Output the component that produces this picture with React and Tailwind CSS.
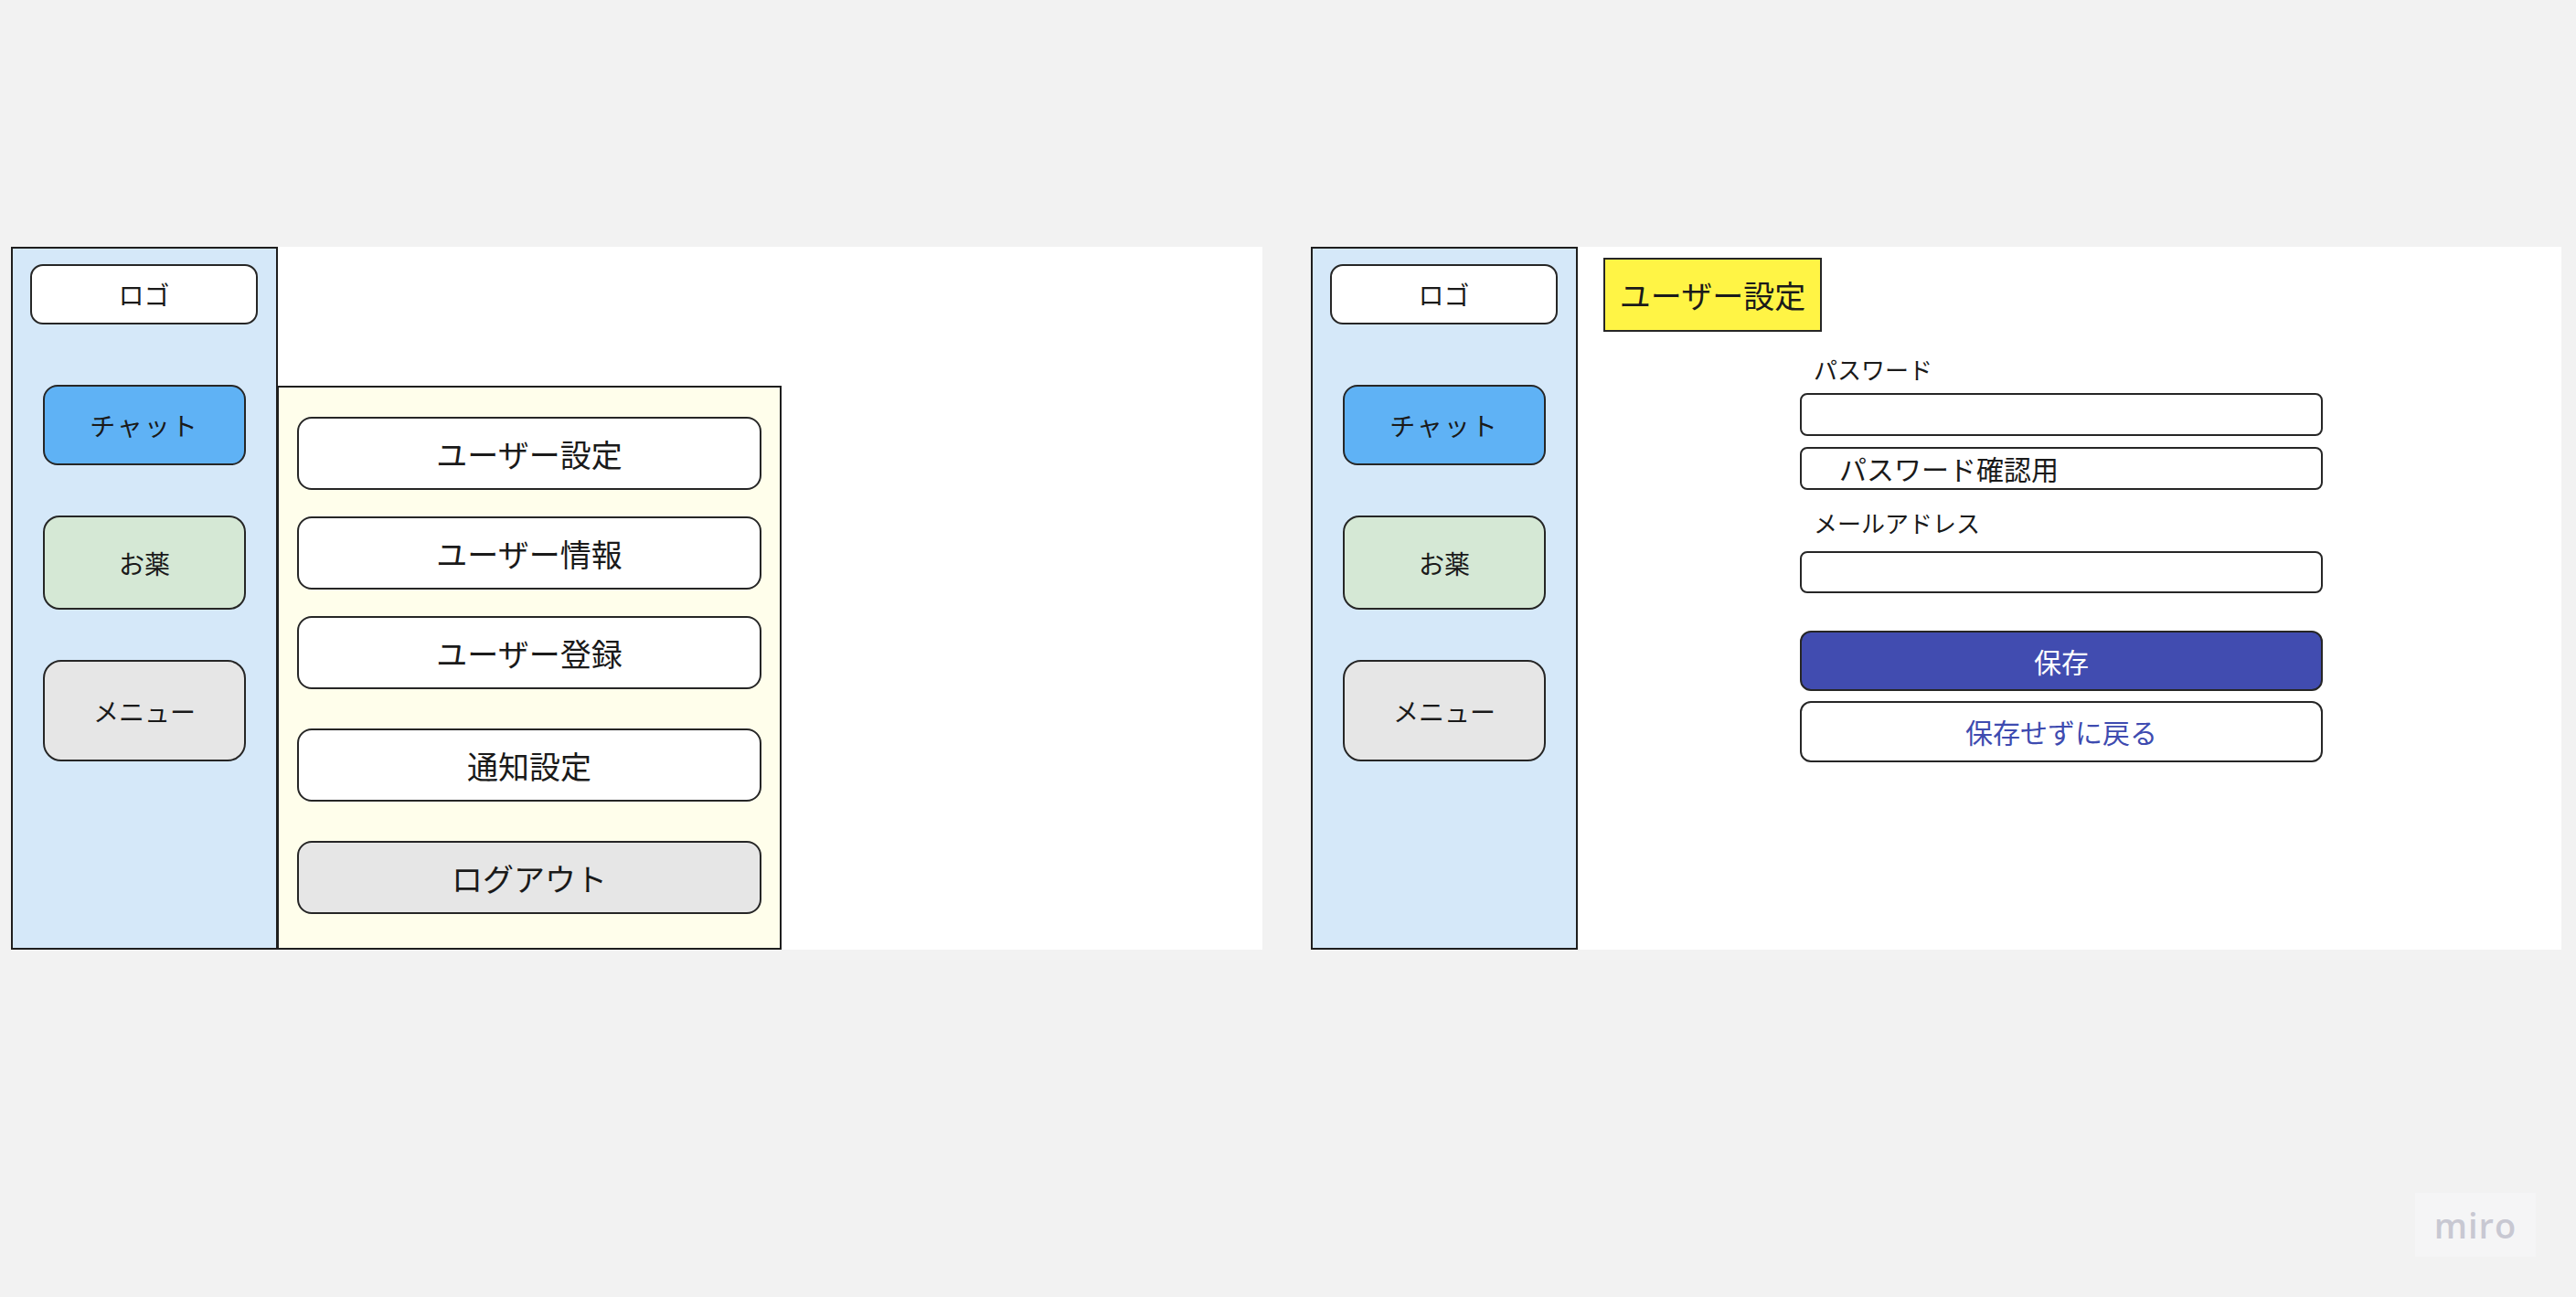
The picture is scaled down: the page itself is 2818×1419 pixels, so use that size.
import React from "react";

const font = { fontFamily: '"Noto Sans CJK JP", "Noto Sans", sans-serif' };

const Sidebar = () => (
  <div className="w-[292px] h-full shrink-0 bg-[#d5e8f9] border-2 border-[#1e1e1e] flex flex-col">
    <div className="mt-[17px] ml-[19px] w-[249px] h-[66px] bg-white border-2 border-[#262626] rounded-[14px] flex items-center justify-center text-[28px] text-[#1a1a1a]">
      ロゴ
    </div>
    <div className="mt-[66px] ml-[33px] w-[222px] h-[88px] bg-[#5fb2f5] border-2 border-[#262626] rounded-[16px] flex items-center justify-center text-[28px] text-[#1a1a1a] tracking-[2px]">
      チャット
    </div>
    <div className="mt-[55px] ml-[33px] w-[222px] h-[103px] bg-[#d5e8d5] border-2 border-[#262626] rounded-[18px] flex items-center justify-center text-[28px] text-[#1a1a1a]">
      お薬
    </div>
    <div className="mt-[55px] ml-[33px] w-[222px] h-[111px] bg-[#e6e6e6] border-2 border-[#262626] rounded-[20px] flex items-center justify-center text-[28px] text-[#1a1a1a]">
      メニュー
    </div>
  </div>
);

const menuItems = [
  { label: "ユーザー設定", mt: "mt-[32px]", bg: "bg-white" },
  { label: "ユーザー情報", mt: "mt-[29px]", bg: "bg-white" },
  { label: "ユーザー登録", mt: "mt-[29px]", bg: "bg-white" },
  { label: "通知設定", mt: "mt-[43px]", bg: "bg-white" },
  { label: "ログアウト", mt: "mt-[43px]", bg: "bg-[#e6e6e6]" },
];

const MenuPanel = () => (
  <div className="w-[553px] flex-1 -ml-[2px] bg-[#fffeeb] border-2 border-l-[3px] border-[#1e1e1e] flex flex-col pl-[20px]">
    {menuItems.map((item) => (
      <div
        key={item.label}
        className={`${item.mt} w-[508px] h-[80px] ${item.bg} border-2 border-[#262626] rounded-[16px] flex items-center justify-center text-[34px] text-[#1a1a1a]`}
      >
        {item.label}
      </div>
    ))}
  </div>
);

const SettingsForm = () => (
  <div className="flex flex-col">
    <div className="mt-[12px] ml-[28px] w-[239px] h-[81px] bg-[#fff445] border-2 border-[#262626] flex items-center justify-center text-[34px] text-[#1a1a1a]">
      ユーザー設定
    </div>
    <div className="ml-[243px] w-[572px] flex flex-col">
      <div className="h-[67px] pt-[14px] pl-[15px] flex items-center text-[26px] text-[#1a1a1a]">
        パスワード
      </div>
      <div className="h-[47px] bg-white border-2 border-[#262626] rounded-[8px]" />
      <div className="mt-[12px] h-[47px] bg-white border-2 border-[#262626] rounded-[8px] flex items-center pl-[41px] text-[30px] text-[#1a1a1a]">
        パスワード確認用
      </div>
      <div className="h-[67px] pt-[4px] pl-[15px] flex items-center text-[26px] text-[#1a1a1a]">
        メールアドレス
      </div>
      <div className="h-[46px] bg-white border-2 border-[#262626] rounded-[8px]" />
      <div className="mt-[41px] h-[66px] bg-[#414cb0] border-2 border-[#262626] rounded-[12px] flex items-center justify-center text-[30px] text-white">
        保存
      </div>
      <div className="mt-[11px] h-[67px] bg-white border-2 border-[#262626] rounded-[12px] flex items-center justify-center text-[30px] text-[#3e4bb0]">
        保存せずに戻る
      </div>
    </div>
  </div>
);

export default function App() {
  return (
    <div className="relative w-[2818px] h-[1419px] bg-[#f2f2f2] overflow-hidden" style={font}>
      <div className="flex pt-[270px] pl-[12px] gap-[53px]">
        {/* メニュー画面 */}
        <div className="w-[1369px] h-[769px] bg-white flex">
          <Sidebar />
          <div className="flex flex-col h-full">
            <div className="h-[152px] shrink-0" />
            <MenuPanel />
          </div>
        </div>

        {/* ユーザー設定画面 */}
        <div className="w-[1368px] h-[769px] bg-white flex">
          <Sidebar />
          <SettingsForm />
        </div>
      </div>

      {/* miro watermark */}
      <div className="absolute left-[2642px] top-[1305px] w-[132px] h-[70px] bg-[#f5f5f6] flex items-center justify-center">
        <span className="text-[38px] font-semibold text-[#c8c8d2] tracking-[1px] leading-none" style={{ fontFamily: '"Open Sans", "Noto Sans", sans-serif' }}>
          miro
        </span>
      </div>
    </div>
  );
}
